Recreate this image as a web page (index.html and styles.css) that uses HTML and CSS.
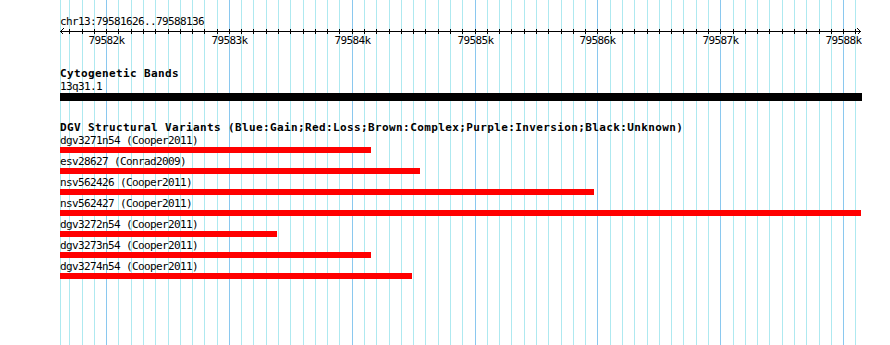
FILE: index.html
```html
<!DOCTYPE html>
<html lang="en">
<head>
<meta charset="UTF-8">
<title>chr13:79581626..79588136</title>
<link rel="stylesheet" href="styles.css">
</head>
<body>
<div class="panel">
  <!-- grid: one line per 100 bp, darker line per kb -->
  <svg class="grid" width="890" height="345" shape-rendering="crispEdges">
    <g class="minor">
      <rect x="60" width="1" height="345"/>
      <rect x="69" width="1" height="345"/><rect x="82" width="1" height="345"/><rect x="94" width="1" height="345"/>
      <rect x="118" width="1" height="345"/><rect x="131" width="1" height="345"/><rect x="143" width="1" height="345"/>
      <rect x="155" width="1" height="345"/><rect x="168" width="1" height="345"/><rect x="180" width="1" height="345"/>
      <rect x="192" width="1" height="345"/><rect x="204" width="1" height="345"/><rect x="217" width="1" height="345"/>
      <rect x="241" width="1" height="345"/><rect x="253" width="1" height="345"/><rect x="266" width="1" height="345"/>
      <rect x="278" width="1" height="345"/><rect x="290" width="1" height="345"/><rect x="303" width="1" height="345"/>
      <rect x="315" width="1" height="345"/><rect x="327" width="1" height="345"/><rect x="339" width="1" height="345"/>
      <rect x="364" width="1" height="345"/><rect x="376" width="1" height="345"/><rect x="389" width="1" height="345"/>
      <rect x="401" width="1" height="345"/><rect x="413" width="1" height="345"/><rect x="425" width="1" height="345"/>
      <rect x="438" width="1" height="345"/><rect x="450" width="1" height="345"/><rect x="462" width="1" height="345"/>
      <rect x="487" width="1" height="345"/><rect x="499" width="1" height="345"/><rect x="511" width="1" height="345"/>
      <rect x="524" width="1" height="345"/><rect x="536" width="1" height="345"/><rect x="548" width="1" height="345"/>
      <rect x="561" width="1" height="345"/><rect x="573" width="1" height="345"/><rect x="585" width="1" height="345"/>
      <rect x="610" width="1" height="345"/><rect x="622" width="1" height="345"/><rect x="634" width="1" height="345"/>
      <rect x="647" width="1" height="345"/><rect x="659" width="1" height="345"/><rect x="671" width="1" height="345"/>
      <rect x="683" width="1" height="345"/><rect x="696" width="1" height="345"/><rect x="708" width="1" height="345"/>
      <rect x="733" width="1" height="345"/><rect x="745" width="1" height="345"/><rect x="757" width="1" height="345"/>
      <rect x="769" width="1" height="345"/><rect x="782" width="1" height="345"/><rect x="794" width="1" height="345"/>
      <rect x="806" width="1" height="345"/><rect x="819" width="1" height="345"/><rect x="831" width="1" height="345"/>
      <rect x="855" width="1" height="345"/>
    </g>
    <g class="major">
      <rect x="106" width="1" height="345"/><rect x="229" width="1" height="345"/><rect x="352" width="1" height="345"/>
      <rect x="475" width="1" height="345"/><rect x="597" width="1" height="345"/><rect x="720" width="1" height="345"/>
      <rect x="843" width="1" height="345"/>
    </g>
  </svg>

  <div class="ruler-title">chr13:79581626..79588136</div>
  <svg class="ruler" width="802" height="19" shape-rendering="crispEdges">
    <rect x="0" y="3" width="801" height="1"/>
    <path class="arrow" d="M3.5 0.5 L0.5 3.5 L3.5 6.5"/>
    <path class="arrow" d="M797.5 0.5 L800.5 3.5 L797.5 6.5"/>
    <g class="ticks">
      <rect x="9" y="1" width="1" height="5"/><rect x="22" y="1" width="1" height="5"/><rect x="34" y="1" width="1" height="5"/>
      <rect x="46" y="1" width="1" height="5"/><rect x="58" y="1" width="1" height="5"/><rect x="71" y="1" width="1" height="5"/>
      <rect x="83" y="1" width="1" height="5"/><rect x="95" y="1" width="1" height="5"/><rect x="108" y="1" width="1" height="5"/>
      <rect x="120" y="1" width="1" height="5"/><rect x="132" y="1" width="1" height="5"/><rect x="144" y="1" width="1" height="5"/>
      <rect x="157" y="1" width="1" height="5"/><rect x="169" y="1" width="1" height="5"/><rect x="181" y="1" width="1" height="5"/>
      <rect x="193" y="1" width="1" height="5"/><rect x="206" y="1" width="1" height="5"/><rect x="218" y="1" width="1" height="5"/>
      <rect x="230" y="1" width="1" height="5"/><rect x="243" y="1" width="1" height="5"/><rect x="255" y="1" width="1" height="5"/>
      <rect x="267" y="1" width="1" height="5"/><rect x="279" y="1" width="1" height="5"/><rect x="292" y="1" width="1" height="5"/>
      <rect x="304" y="1" width="1" height="5"/><rect x="316" y="1" width="1" height="5"/><rect x="329" y="1" width="1" height="5"/>
      <rect x="341" y="1" width="1" height="5"/><rect x="353" y="1" width="1" height="5"/><rect x="365" y="1" width="1" height="5"/>
      <rect x="378" y="1" width="1" height="5"/><rect x="390" y="1" width="1" height="5"/><rect x="402" y="1" width="1" height="5"/>
      <rect x="415" y="1" width="1" height="5"/><rect x="427" y="1" width="1" height="5"/><rect x="439" y="1" width="1" height="5"/>
      <rect x="451" y="1" width="1" height="5"/><rect x="464" y="1" width="1" height="5"/><rect x="476" y="1" width="1" height="5"/>
      <rect x="488" y="1" width="1" height="5"/><rect x="501" y="1" width="1" height="5"/><rect x="513" y="1" width="1" height="5"/>
      <rect x="525" y="1" width="1" height="5"/><rect x="537" y="1" width="1" height="5"/><rect x="550" y="1" width="1" height="5"/>
      <rect x="562" y="1" width="1" height="5"/><rect x="574" y="1" width="1" height="5"/><rect x="587" y="1" width="1" height="5"/>
      <rect x="599" y="1" width="1" height="5"/><rect x="611" y="1" width="1" height="5"/><rect x="623" y="1" width="1" height="5"/>
      <rect x="636" y="1" width="1" height="5"/><rect x="648" y="1" width="1" height="5"/><rect x="660" y="1" width="1" height="5"/>
      <rect x="673" y="1" width="1" height="5"/><rect x="685" y="1" width="1" height="5"/><rect x="697" y="1" width="1" height="5"/>
      <rect x="709" y="1" width="1" height="5"/><rect x="722" y="1" width="1" height="5"/><rect x="734" y="1" width="1" height="5"/>
      <rect x="746" y="1" width="1" height="5"/><rect x="759" y="1" width="1" height="5"/><rect x="771" y="1" width="1" height="5"/>
      <rect x="783" y="1" width="1" height="5"/><rect x="795" y="1" width="1" height="5"/>
    </g>
    <g class="tick-labels">
      <text x="28.5" y="16">79582k</text>
      <text x="151.5" y="16">79583k</text>
      <text x="274.5" y="16">79584k</text>
      <text x="397.5" y="16">79585k</text>
      <text x="519.5" y="16">79586k</text>
      <text x="642.5" y="16">79587k</text>
      <text x="765.5" y="16">79588k</text>
    </g>
  </svg>

  <section class="track cyto">
    <div class="track-title">Cytogenetic Bands</div>
    <div class="label">13q31.1</div>
    <div class="band"></div>
  </section>

  <section class="track dgv">
    <div class="track-title">DGV Structural Variants (Blue:Gain;Red:Loss;Brown:Complex;Purple:Inversion;Black:Unknown)</div>
    <div class="feature">
      <div class="label">dgv3271n54 (Cooper2011)</div>
      <div class="bar loss" style="width: 311px"></div>
    </div>
    <div class="feature">
      <div class="label">esv28627 (Conrad2009)</div>
      <div class="bar loss" style="width: 360px"></div>
    </div>
    <div class="feature">
      <div class="label">nsv562426 (Cooper2011)</div>
      <div class="bar loss" style="width: 534px"></div>
    </div>
    <div class="feature">
      <div class="label">nsv562427 (Cooper2011)</div>
      <div class="bar loss" style="width: 801px"></div>
    </div>
    <div class="feature">
      <div class="label">dgv3272n54 (Cooper2011)</div>
      <div class="bar loss" style="width: 217px"></div>
    </div>
    <div class="feature">
      <div class="label">dgv3273n54 (Cooper2011)</div>
      <div class="bar loss" style="width: 311px"></div>
    </div>
    <div class="feature">
      <div class="label">dgv3274n54 (Cooper2011)</div>
      <div class="bar loss" style="width: 352px"></div>
    </div>
  </section>
</div>
</body>
</html>
```

FILE: styles.css
```css
  body {
    margin: 0;
    background-color: #fff;
    font-family: "DejaVu Sans Mono", "Liberation Mono", monospace;
    font-size: 11px;
    letter-spacing: -0.62px;
    color: #000;
  }
  .panel {
    position: relative;
    z-index: 0;
    width: 802px;
    height: 330px;
    padding: 15px 28px 0 60px;
  }
  .grid {
    position: absolute;
    left: 0;
    top: 0;
    z-index: -1;
  }
  .grid .minor {
    fill: #aee9f0;
  }
  .grid .major {
    fill: #8ac8ef;
  }
  .ruler-title {
    line-height: 13px;
    height: 13px;
    white-space: nowrap;
  }
  .ruler {
    display: block;
    fill: #000;
  }
  .ruler .arrow {
    fill: none;
    stroke: #000;
    stroke-width: 1;
  }
  /* labels start 18px left of their kb tick (6 chars x 6px) */
  .ruler text {
    font-family: "DejaVu Sans Mono", "Liberation Mono", monospace;
    font-size: 11px;
    letter-spacing: -0.62px;
  }
  .track {
    margin-top: 20px;
  }
  .track-title {
    font-weight: bold;
    font-size: 11px;
    letter-spacing: 0.38px;
    line-height: 13px;
    height: 13px;
    white-space: nowrap;
  }
  .label {
    line-height: 13px;
    height: 13px;
    white-space: nowrap;
  }
  .band {
    width: 802px;
    height: 8px;
    background-color: #000;
  }
  .feature {
    padding-bottom: 2px;
  }
  .bar {
    height: 6px;
  }
  .loss {
    background-color: #ff0000;
  }
```
